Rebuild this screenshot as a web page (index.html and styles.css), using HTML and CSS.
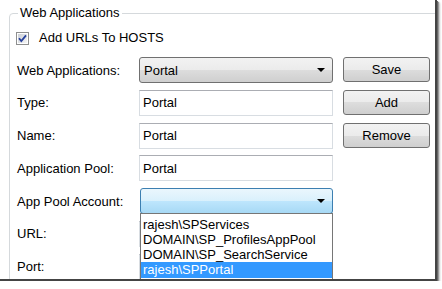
FILE: index.html
```html
<!DOCTYPE html>
<html lang="en">
<head>
  <meta charset="UTF-8" />
  <title>Web Applications</title>
  <link rel="stylesheet" href="styles.css">
</head>
<body>
  <div class="window">
    <fieldset class="group">
      <legend>Web Applications</legend>

      <label class="check">
        <svg class="box" width="13" height="13" viewBox="0 0 13 13">
          <defs>
            <linearGradient id="boxfill" x1="0" y1="0" x2="1" y2="1">
              <stop offset="0" stop-color="#cbcfd5"/>
              <stop offset="1" stop-color="#f6f6f6"/>
            </linearGradient>
          </defs>
          <rect x="0.5" y="0.5" width="12" height="12" fill="#fff" stroke="#8e8f8f"/>
          <rect x="2" y="2" width="9" height="9" fill="url(#boxfill)"/>
          <path d="M3 6.2 L5.3 9 L10 3.4" fill="none" stroke="#26409c" stroke-width="1.8"/>
        </svg>
        Add URLs To HOSTS
      </label>

      <div class="form">
        <span class="label">Web Applications:</span>
        <div class="combo"><span>Portal</span><i class="arrow"></i></div>
        <button class="btn">Save</button>

        <span class="label">Type:</span>
        <div class="text">Portal</div>
        <button class="btn">Add</button>

        <span class="label">Name:</span>
        <div class="text">Portal</div>
        <button class="btn">Remove</button>

        <span class="label">Application Pool:</span>
        <div class="text">Portal</div>

        <span class="label">App Pool Account:</span>
        <div class="combo open">
          <span></span><i class="arrow"></i>
          <ul class="list">
            <li>rajesh\SPServices</li>
            <li>DOMAIN\SP_ProfilesAppPool</li>
            <li>DOMAIN\SP_SearchService</li>
            <li class="selected">rajesh\SPPortal</li>
          </ul>
        </div>

        <span class="label">URL:</span>
        <div class="text"></div>

        <span class="label">Port:</span>
        <div class="text"></div>
      </div>
    </fieldset>
  </div>
</body>
</html>
```

FILE: styles.css
```css
* {
  margin: 0;
  padding: 0;
  box-sizing: border-box;
}

body {
  background: #fff;
  font-family: 'Liberation Sans', Arial, sans-serif;
  font-size: 13px;
  color: #000;
}

.window {
  width: 437px;
  height: 281px;
  background: #fff;
  overflow: hidden;
  border-right: 2px solid #444;
  border-bottom: 2px solid #444;
  box-shadow: 1px 1px 0 #666, 2px 2px 1px #999, 3px 3px 2px #ccc;
}

.group {
  margin: 5px -20px 0 9px;
  min-height: 320px;
  border: 1px solid #d5d9dc;
  border-radius: 4px;
  padding: 0;
}

.group legend {
  margin-left: 8px;
  padding: 0 2px;
  line-height: 16px;
}

.check {
  display: flex;
  align-items: center;
  gap: 10px;
  margin: 10px 0 0 6px;
  height: 14px;
  line-height: 14px;
}

.form {
  display: grid;
  grid-template-columns: 112px 194px 87px;
  grid-auto-rows: 26px;
  column-gap: 10px;
  row-gap: 6.75px;
  margin: 12px 0 0 7px;
}

.label {
  grid-column: 1;
  display: flex;
  align-items: center;
  white-space: nowrap;
}

.text {
  border: 1px solid #d8dde2;
  border-top-color: #abadb3;
  padding: 0 3px;
  display: flex;
  align-items: center;
  background: #fff;
}

.combo {
  position: relative;
  display: flex;
  align-items: center;
  justify-content: space-between;
  padding: 0 7px 0 4px;
  border: 1px solid #707070;
  border-radius: 3px;
  background: linear-gradient(#f2f2f2, #ebebeb 50%, #dddddd 50%, #cfcfcf);
}

.combo.open {
  border-color: #3c7fb1;
  background: linear-gradient(#eaf6fd, #d9f0fc 50%, #bee6fd 50%, #a7d9f5);
  margin-left: 1px;
}

.arrow {
  width: 0;
  height: 0;
  border-left: 4px solid transparent;
  border-right: 4px solid transparent;
  border-top: 4px solid #000;
}

.btn {
  font: inherit;
  color: #000;
  border: 1px solid #707070;
  border-radius: 3px;
  background: linear-gradient(#f2f2f2, #ebebeb 50%, #dddddd 50%, #cfcfcf);
  height: 25px;
}

.list {
  position: absolute;
  top: 24px;
  left: -1px;
  right: -1px;
  list-style: none;
  background: #fff;
  border: 1px solid #767676;
  padding: 3px 0 2px 0;
}

.list li {
  height: 15px;
  line-height: 15px;
  padding-left: 2px;
  white-space: nowrap;
}

.list li.selected {
  height: 16px;
  line-height: 16px;
  background: #3399ff;
  color: #fff;
}
```
